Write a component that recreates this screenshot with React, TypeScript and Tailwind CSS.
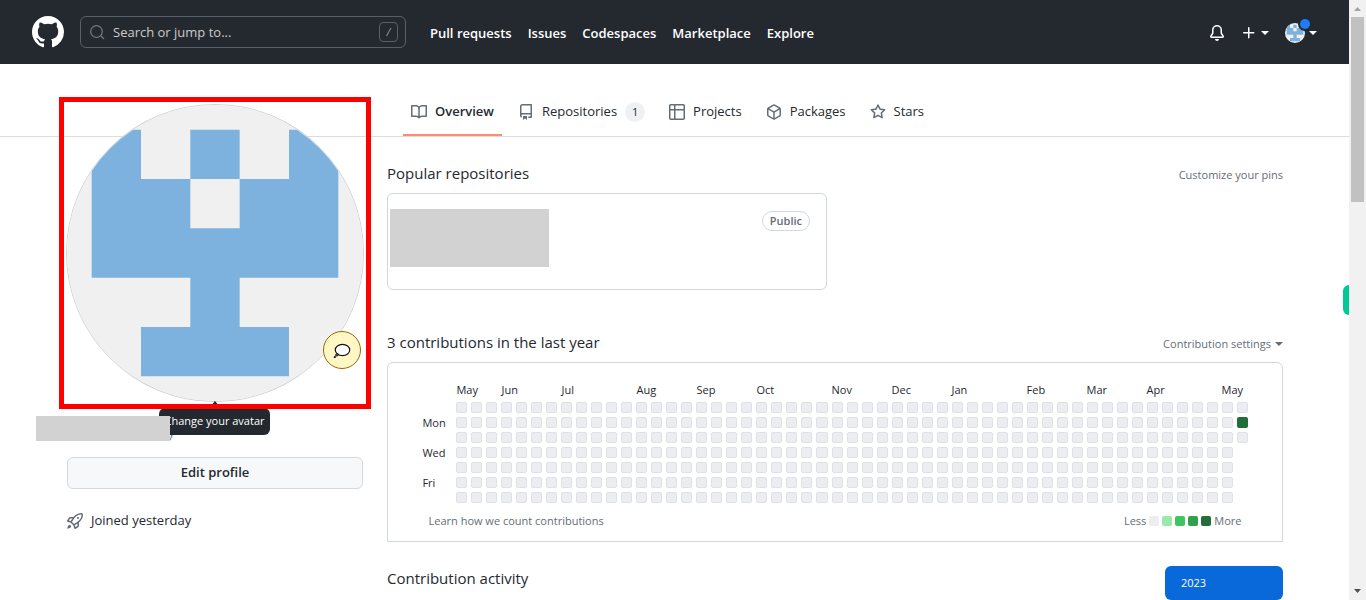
import React from 'react';
import clsx from 'clsx';

const ICONS = {
  github: 'M8 0C3.58 0 0 3.58 0 8c0 3.54 2.29 6.53 5.47 7.59.4.07.55-.17.55-.38 0-.19-.01-.82-.01-1.49-2.01.37-2.53-.49-2.69-.94-.09-.23-.48-.94-.82-1.13-.28-.15-.68-.52-.01-.53.63-.01 1.08.58 1.23.82.72 1.21 1.87.87 2.33.66.07-.52.28-.87.51-1.07-1.78-.2-3.64-.89-3.64-3.95 0-.87.31-1.59.82-2.15-.08-.2-.36-1.02.08-2.12 0 0 .67-.21 2.2.82.64-.18 1.32-.27 2-.27.68 0 1.36.09 2 .27 1.53-1.04 2.2-.82 2.2-.82.44 1.1.16 1.92.08 2.12.51.56.82 1.27.82 2.15 0 3.07-1.87 3.75-3.65 3.95.29.25.54.73.54 1.48 0 1.07-.01 1.93-.01 2.2 0 .21.15.46.55.38A8.013 8.013 0 0016 8c0-4.42-3.58-8-8-8z',
  bell: 'M8 16a2 2 0 001.985-1.75c.017-.137-.097-.25-.235-.25h-3.5c-.138 0-.252.113-.235.25A2 2 0 008 16zM8 1.5A3.5 3.5 0 004.5 5v2.947c0 .346-.102.683-.294.97l-1.703 2.556a.018.018 0 00-.003.01l.001.006c0 .002.002.004.004.006a.017.017 0 00.006.004l.007.001h10.964l.007-.001a.016.016 0 00.006-.004.016.016 0 00.004-.006l.001-.007a.017.017 0 00-.003-.01l-1.703-2.554a1.75 1.75 0 01-.294-.97V5A3.5 3.5 0 008 1.5zM3 5a5 5 0 0110 0v2.947c0 .05.015.098.042.139l1.703 2.555A1.518 1.518 0 0113.482 13H2.518a1.518 1.518 0 01-1.263-2.36l1.703-2.554A.25.25 0 003 7.947V5z',
  plus: 'M7.75 2a.75.75 0 01.75.75V7h4.25a.75.75 0 110 1.5H8.5v4.25a.75.75 0 11-1.5 0V8.5H2.75a.75.75 0 010-1.5H7V2.75A.75.75 0 017.75 2z',
  book: 'M0 1.75A.75.75 0 01.75 1h4.253c1.227 0 2.317.59 3 1.501A3.744 3.744 0 0111.006 1h4.245a.75.75 0 01.75.75v10.5a.75.75 0 01-.75.75h-4.507a2.25 2.25 0 00-1.591.659l-.622.621a.75.75 0 01-1.06 0l-.622-.621A2.25 2.25 0 005.258 13H.75a.75.75 0 01-.75-.75V1.75zm8.755 3a2.25 2.25 0 012.25-2.25H14.5v9h-3.757c-.71 0-1.4.201-1.992.572l.004-7.322zm-1.504 7.324l.004-5.073-.002-2.253A2.25 2.25 0 005.003 2.5H1.5v9h3.757a3.75 3.75 0 011.994.574z',
  repo: 'M2 2.5A2.5 2.5 0 014.5 0h8.75a.75.75 0 01.75.75v12.5a.75.75 0 01-.75.75h-2.5a.75.75 0 110-1.5h1.75v-2h-8a1 1 0 00-.714 1.7.75.75 0 01-1.072 1.05A2.495 2.495 0 012 11.5v-9zm10.5-1V9h-8c-.356 0-.694.074-1 .208V2.5a1 1 0 011-1h8zM5 12.25v3.25a.25.25 0 00.4.2l1.45-1.087a.25.25 0 01.3 0L8.6 15.7a.25.25 0 00.4-.2v-3.25a.25.25 0 00-.25-.25h-3.5a.25.25 0 00-.25.25z',
  table: 'M0 1.75C0 .784.784 0 1.75 0h12.5C15.216 0 16 .784 16 1.75v12.5A1.75 1.75 0 0114.25 16H1.75A1.75 1.75 0 010 14.25zM6.5 6.5v8h7.75a.25.25 0 00.25-.25V6.5zm8-1.5V1.75a.25.25 0 00-.25-.25H6.5V5zm-13 1.5v7.75c0 .138.112.25.25.25H5v-8zM5 5V1.5H1.75a.25.25 0 00-.25.25V5z',
  package: 'M8.878.392a1.75 1.75 0 00-1.756 0l-5.25 3.045A1.75 1.75 0 001 4.951v6.098c0 .624.332 1.2.872 1.514l5.25 3.045a1.75 1.75 0 001.756 0l5.25-3.045c.54-.313.872-.89.872-1.514V4.951c0-.624-.332-1.2-.872-1.514L8.878.392zM7.875 1.69a.25.25 0 01.25 0l4.63 2.685L8 7.133 3.245 4.375l4.63-2.685zM2.5 5.677v5.372c0 .09.047.171.125.216l4.625 2.683V8.432L2.5 5.677zm6.25 8.271l4.625-2.683a.25.25 0 00.125-.216V5.677L8.75 8.432v5.516z',
  star: 'M8 .25a.75.75 0 01.673.418l1.882 3.815 4.21.612a.75.75 0 01.416 1.279l-3.046 2.97.719 4.192a.75.75 0 01-1.088.791L8 12.347l-3.766 1.98a.75.75 0 01-1.088-.79l.72-4.194L.818 6.374a.75.75 0 01.416-1.28l4.21-.611L7.327.668A.75.75 0 018 .25zm0 2.445L6.615 5.5a.75.75 0 01-.564.41l-3.097.45 2.24 2.184a.75.75 0 01.216.664l-.528 3.084 2.769-1.456a.75.75 0 01.698 0l2.77 1.456-.53-3.084a.75.75 0 01.216-.664l2.24-2.183-3.096-.45a.75.75 0 01-.564-.41L8 2.694v.001z',
  rocket: 'M14.064 0a8.75 8.75 0 00-6.187 2.563l-.459.458c-.314.314-.616.641-.904.979H3.31a1.75 1.75 0 00-1.49.833L.11 7.607a.75.75 0 00.418 1.11l3.102.954c.037.051.079.1.124.145l2.429 2.428c.046.046.094.088.145.125l.954 3.102a.75.75 0 001.11.418l2.774-1.707a1.75 1.75 0 00.833-1.49V9.485c.338-.288.665-.59.979-.904l.458-.459A8.75 8.75 0 0016 1.936V1.75A1.75 1.75 0 0014.25 0h-.186zM10.5 10.625c-.088.06-.177.118-.266.175l-2.35 1.521.548 1.783 1.949-1.2a.25.25 0 00.119-.213v-2.066zM3.678 8.116L5.2 5.766c.058-.09.117-.178.176-.266H3.309a.25.25 0 00-.213.119l-1.2 1.95 1.782.547zm5.26-4.493A7.25 7.25 0 0114.063 1.5h.186a.25.25 0 01.25.25v.186a7.25 7.25 0 01-2.123 5.127l-.459.458a15.21 15.21 0 01-2.499 2.02l-2.317 1.5-2.143-2.143 1.5-2.317a15.25 15.25 0 012.02-2.5l.458-.458h.002zM12 5a1 1 0 11-2 0 1 1 0 012 0zm-8.44 9.56a1.5 1.5 0 10-2.12-2.12c-.734.73-1.047 2.332-1.15 3.003a.23.23 0 00.265.265c.671-.103 2.273-.416 3.005-1.148z',
};

type IconName = keyof typeof ICONS;

const Icon: React.FC<{ name: IconName; className?: string }> = ({ name, className }) => (
  <svg viewBox="0 0 16 16" fill="currentColor" aria-hidden="true" className={clsx('shrink-0', className ?? 'size-4')}>
    <path fillRule="evenodd" d={ICONS[name]} />
  </svg>
);

const Caret: React.FC = () => (
  <svg viewBox="0 0 8 4" fill="currentColor" aria-hidden="true" className="h-1 w-2 shrink-0">
    <path d="M0 0h8L4 4z" />
  </svg>
);

const Identicon: React.FC<{ className: string }> = ({ className }) => (
  <svg viewBox="0 0 420 420" role="img" aria-label="Avatar" className={className}>
    <rect width="420" height="420" fill="#f0f0f0" />
    <path
      fill="#7db2df"
      d="M35 35h70v70h70v-70h70v70h70v-70h70v210h-140v70h70v70h-210v-70h70v-70h-140zM175 105v70h70v-70z"
      fillRule="evenodd"
    />
  </svg>
);

const GLOBAL_LINKS = ['Pull requests', 'Issues', 'Codespaces', 'Marketplace', 'Explore'];

const TABS: { label: string; icon: IconName; count?: number; active?: boolean }[] = [
  { label: 'Overview', icon: 'book', active: true },
  { label: 'Repositories', icon: 'repo', count: 1 },
  { label: 'Projects', icon: 'table' },
  { label: 'Packages', icon: 'package' },
  { label: 'Stars', icon: 'star' },
];

const Header: React.FC = () => (
  <header className="flex h-16 items-center bg-[#24292f] px-8 text-white">
    <a href="#home" aria-label="Homepage" className="mr-4">
      <Icon name="github" className="size-8" />
    </a>
    <label className="mr-6 flex h-8 w-[326px] items-center rounded-md border border-[#57606a] pr-[7px] pl-2">
      <svg viewBox="0 0 16 16" fill="none" stroke="#6e7681" strokeWidth="1.3" aria-hidden="true" className="size-4">
        <circle cx="7.5" cy="7.5" r="5.8" />
        <path d="M11.8 11.8L15 15" />
      </svg>
      <input
        type="text"
        aria-label="Search or jump to"
        placeholder="Search or jump to..."
        className="min-w-0 flex-1 bg-transparent px-2 pt-0.5 text-[13px] outline-none placeholder:text-[#cacbcc]"
      />
      <kbd className="flex h-5 w-[19px] items-center justify-center rounded-sm border border-[#57606a] font-[inherit] text-[11px] text-[#9a9ea3] italic">
        /
      </kbd>
    </label>
    <nav aria-label="Global" className="flex gap-4 pt-1 text-[13px] font-semibold">
      {GLOBAL_LINKS.map(l => (
        <a key={l} href="#global">{l}</a>
      ))}
    </nav>
    <div className="ml-auto flex items-center gap-4 pt-0.5">
      <button aria-label="Notifications"><Icon name="bell" /></button>
      <button aria-label="Create new" className="flex items-center gap-1">
        <Icon name="plus" /><Caret />
      </button>
      <button aria-label="View profile" className="relative flex items-center gap-1">
        <Identicon className="size-5 rounded-full" />
        <span className="absolute -top-1 left-[15px] size-[10px] rounded-full bg-[#1f7cf5] ring-2 ring-[#24292f]" />
        <Caret />
      </button>
    </div>
  </header>
);

const ProfileTabs: React.FC = () => (
  <div className="mt-6 border-b border-[#d8dee4]">
    <div className="mx-auto flex max-w-[1279px] gap-6 pr-[31px] pl-8">
      <div className="w-[296px] shrink-0" />
      <nav aria-label="User profile" className="ml-4 flex gap-2 text-[13px]">
        {TABS.map(t => (
          <a
            key={t.label}
            href="#tab"
            className={clsx(
              'flex h-12 items-center gap-2 border-b-2 px-2 pt-0.5',
              t.active ? 'border-[#fd8c73] font-semibold' : 'border-transparent',
            )}
          >
            <Icon name={t.icon} className="size-4 text-[#656d76]" />
            {t.label}
            {t.count !== undefined && (
              <span className="flex size-5 items-center justify-center rounded-full bg-[#eff1f3] text-[11px]">{t.count}</span>
            )}
          </a>
        ))}
      </nav>
    </div>
  </div>
);

const Sidebar: React.FC = () => (
  <aside className="z-10 -mt-8 w-[296px] shrink-0">
    <div className="relative">
      <a href="#avatar" className="block">
        <Identicon className="aspect-square w-full rounded-full ring-1 ring-[#d0d5da]" />
      </a>
      <button
        aria-label="Set status"
        className="absolute right-[2px] bottom-8 flex size-[38px] items-center justify-center rounded-full border border-[#9a6700] bg-[#fff8c5]"
      >
        <svg viewBox="0 0 18 16" fill="#fff" stroke="#111" strokeWidth="1.2" aria-hidden="true" className="h-4 w-[18px]">
          <ellipse cx="9.5" cy="8" rx="7.2" ry="5.6" />
          <path d="M5.200 12.300c-1.300-.9-2.600-.2-2.400.8.100.7.900 1 1.500.6.700-.400 1-.9.900-1.400z" />
          <circle cx="1.800" cy="15" r=".5" />
        </svg>
      </button>
      <span className="absolute top-full left-1/2 size-0 -translate-x-1/2 border-x-[6px] border-b-[7px] border-x-transparent border-b-[#24292f]" />
      <span role="tooltip" className="absolute top-full left-[92px] z-10 mt-[7px] flex h-[27px] w-[111px] items-center justify-center rounded-md bg-[#24292f] text-[11px] whitespace-nowrap text-white">
        Change your avatar
      </span>
      <div className="pointer-events-none absolute -inset-2 z-20 border-[5px] border-[#ff0000]" />
    </div>
    <div className="relative mt-[15px] h-[25px]">
      <span className="block pl-[100px] text-xl leading-[26px] font-light text-[#656d76]">y</span>
      <div className="absolute inset-y-0 -left-[31px] z-20 w-[134px] bg-[#d2d2d2]" />
    </div>
    <button className="mt-4 h-8 w-full rounded-md border border-[#d5d8dc] bg-[#f6f8fa] text-[13px] font-semibold text-[#24292f]">
      Edit profile
    </button>
    <p className="mt-6 flex h-4 items-center gap-2 text-[13px]">
      <Icon name="rocket" className="size-4 text-[#656d76]" />
      Joined yesterday
    </p>
  </aside>
);

// each month label spans the weeks up to the next one
const MONTHS: [string, number][] = [
  ['May', 3], ['Jun', 4], ['Jul', 5], ['Aug', 4], ['Sep', 4], ['Oct', 5], ['Nov', 4],
  ['Dec', 4], ['Jan', 5], ['Feb', 4], ['Mar', 4], ['Apr', 5], ['May', 2],
];
const DAYS = ['', 'Mon', '', 'Wed', '', 'Fri', ''];
const WEEKS = Array.from({ length: 53 }, (_, i) => i);
const LEVELS = ['bg-[#ebedf0]', 'bg-[#9be9a8]', 'bg-[#40c463]', 'bg-[#30a14e]', 'bg-[#216e39]'];

const Calendar: React.FC = () => (
  <table aria-label="Contributions" className="mx-auto w-[833px] table-fixed border-separate border-spacing-1 text-[11px]">
    <colgroup>
      <col className="w-[30px]" />
      {WEEKS.map(w => <col key={w} className="w-[11px]" />)}
    </colgroup>
    <thead>
      <tr className="h-[17px]">
        <td />
        {MONTHS.map(([name, span], i) => (
          <th key={i} colSpan={span} className="p-0 text-left leading-4 font-normal">{name}</th>
        ))}
      </tr>
    </thead>
    <tbody>
      {DAYS.map((day, d) => (
        <tr key={d} className="h-[11px]">
          <th className="p-0 text-left leading-[11px] font-normal">{day}</th>
          {WEEKS.map(w => {
            if (w === 52 && d > 2) return null;
            const hit = w === 52 && d === 1;
            return (
              <td
                key={w}
                className={clsx('rounded-xs p-0', hit ? LEVELS[4] : 'border border-[#dfe1e4] bg-[#ebedf0]')}
              />
            );
          })}
        </tr>
      ))}
    </tbody>
  </table>
);

const Main: React.FC = () => (
  <main className="min-w-0 flex-1 pt-6">
    <div className="flex h-6 items-center justify-between">
      <h2 className="text-[15px]">Popular repositories</h2>
      <a href="#pins" className="pt-1 text-[11px] text-[#656d76]">Customize your pins</a>
    </div>
    <div className="mt-2 grid grid-cols-2 gap-4">
      <div className="flex h-[97px] items-start justify-between rounded-md border border-[#d0d7de] pt-[15px] pr-4 pl-[2px]">
        <div className="h-[58px] w-[159px] bg-[#d2d2d2]" />
        <span className="mt-[2px] flex h-5 items-center rounded-full border border-[#d0d7de] px-[7px] text-[11px] font-semibold text-[#656d76]">
          Public
        </span>
      </div>
    </div>

    <div className="mt-10 flex h-6 items-center justify-between">
      <h2 className="text-[15px]">3 contributions in the last year</h2>
      <button className="flex items-center gap-1 pt-1 text-[11px] text-[#656d76]">
        Contribution settings <Caret />
      </button>
    </div>
    <section className="mt-2 h-[180px] rounded-t-md border border-[#d0d7de] pt-[14px]">
      <Calendar />
      <div className="mx-auto mt-1.5 flex h-4 w-[833px] items-center justify-between px-[10px] text-[11px] text-[#656d76]">
        <a href="#learn">Learn how we count contributions</a>
        <div className="flex items-center gap-[3px]">
          Less
          {LEVELS.map(l => <span key={l} className={clsx('size-[10px] rounded-xs', l)} />)}
          More
        </div>
      </div>
    </section>

    <div className="mt-6 flex items-start justify-between">
      <h2 className="text-[15px] leading-6">Contribution activity</h2>
      <a href="#2023" className="flex h-[34px] w-[118px] items-center rounded-md bg-[#0969da] px-4 text-[11px] text-white">
        2023
      </a>
    </div>
  </main>
);

const ScrollRail: React.FC = () => (
  <div aria-hidden="true" className="sticky top-0 flex h-screen w-[17px] shrink-0 flex-col items-center justify-between bg-[#f1f1f1]">
    <div className="flex w-full flex-col items-center">
      <svg viewBox="0 0 17 17" className="size-[17px]"><path d="M5 11h7L8.500 7z" fill="#a3a3a3" /></svg>
      <div className="h-[185px] w-[13px] bg-[#c1c1c1]" />
    </div>
    <svg viewBox="0 0 17 17" className="size-[17px]"><path d="M5 6h7L8.500 10z" fill="#505050" /></svg>
  </div>
);

const App: React.FC = () => (
  <div className="flex min-h-screen bg-white font-['Open_Sans','Noto_Sans',sans-serif] text-[#24292f]">
    <div className="relative min-w-0 flex-1">
      <Header />
      <ProfileTabs />
      <div className="mx-auto flex max-w-[1279px] items-start gap-6 pr-[31px] pl-8">
        <Sidebar />
        <Main />
      </div>
      <span className="absolute top-[285px] right-0 h-[30px] w-[6px] rounded-l-md bg-[#00c896]" />
    </div>
    <ScrollRail />
  </div>
);

export default App;
